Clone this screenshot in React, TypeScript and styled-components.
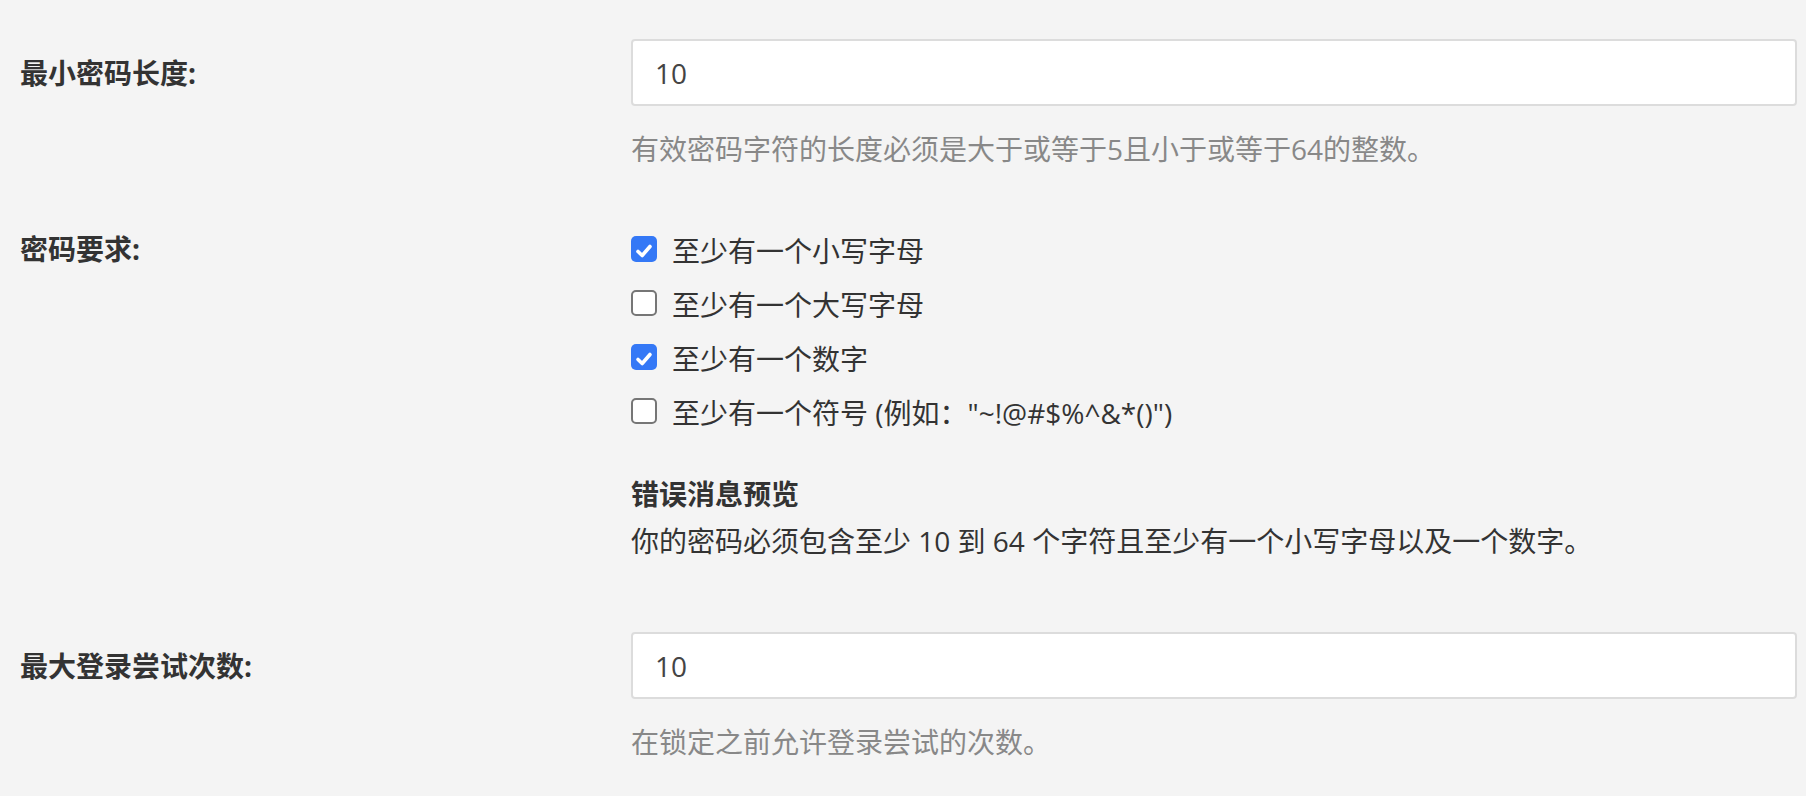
import React, { useState } from 'react';
import styled, { createGlobalStyle } from 'styled-components';

const GlobalStyle = createGlobalStyle`
  html, body {
    margin: 0;
    padding: 0;
    background: #f4f4f4;
  }
  body {
    font-family: 'Open Sans', 'Noto Sans CJK SC', sans-serif;
    color: #333;
  }
`;

type Rule = {
  id: string;
  label: string;
  name: string;
};

const rules: Rule[] = [
  { id: 'lower', label: '至少有一个小写字母', name: '小写字母' },
  { id: 'upper', label: '至少有一个大写字母', name: '大写字母' },
  { id: 'digit', label: '至少有一个数字', name: '数字' },
  { id: 'symbol', label: '至少有一个符号 (例如："~!@#$%^&*()")', name: '符号' },
];

const PasswordSettings = () => {
  const [minLength, setMinLength] = useState('10');
  const [maxAttempts, setMaxAttempts] = useState('10');
  const [checked, setChecked] = useState<Record<string, boolean>>({
    lower: true,
    upper: false,
    digit: true,
    symbol: false,
  });

  const toggle = (id: string) => {
    setChecked((prev) => ({ ...prev, [id]: !prev[id] }));
  };

  const names = rules.filter((r) => checked[r.id]).map((r) => r.name);
  const message =
    `你的密码必须包含至少 ${minLength} 到 64 个字符` +
    (names.length ? `且至少有一个${names.join('以及一个')}` : '') +
    '。';

  return (
    <S.Page>
      <S.Row $align="center">
        <S.Label>最小密码长度:</S.Label>
        <S.Field>
          <S.Input value={minLength} onChange={(e) => setMinLength(e.target.value)} />
        </S.Field>
      </S.Row>
      <S.Row>
        <div />
        <S.Help>有效密码字符的长度必须是大于或等于5且小于或等于64的整数。</S.Help>
      </S.Row>

      <S.Row $gap={52}>
        <S.Label $line={54}>密码要求:</S.Label>
        <S.Field>
          <S.CheckList>
            {rules.map((rule) => (
              <S.CheckItem key={rule.id}>
                <input
                  type="checkbox"
                  checked={!!checked[rule.id]}
                  onChange={() => toggle(rule.id)}
                />
                <S.Box $checked={!!checked[rule.id]}>
                  {checked[rule.id] && (
                    <svg width="22" height="22" viewBox="0 0 22 22">
                      <path
                        d="M5 11.5 L9.2 15.5 L17 6.5"
                        fill="none"
                        stroke="#fff"
                        strokeWidth="3.6"
                        strokeLinecap="round"
                        strokeLinejoin="round"
                      />
                    </svg>
                  )}
                </S.Box>
                <span>{rule.label}</span>
              </S.CheckItem>
            ))}
          </S.CheckList>
          <S.PreviewTitle>错误消息预览</S.PreviewTitle>
          <S.PreviewText>{message}</S.PreviewText>
        </S.Field>
      </S.Row>

      <S.Row $gap={70} $align="center">
        <S.Label>最大登录尝试次数:</S.Label>
        <S.Field>
          <S.Input value={maxAttempts} onChange={(e) => setMaxAttempts(e.target.value)} />
        </S.Field>
      </S.Row>
      <S.Row>
        <div />
        <S.Help>在锁定之前允许登录尝试的次数。</S.Help>
      </S.Row>
    </S.Page>
  );
};

const S = {
  Page: styled.div`
    box-sizing: border-box;
    width: 1806px;
    min-height: 796px;
    padding: 39px 9px 40px 20px;
    font-size: 28px;
    line-height: 42px;
  `,
  Row: styled.div<{ $gap?: number; $align?: string }>`
    display: grid;
    grid-template-columns: 611px 1fr;
    align-items: ${(p) => p.$align || 'start'};
    margin-top: ${(p) => (p.$gap ? `${p.$gap}px` : '0')};
  `,
  Label: styled.div<{ $line?: number }>`
    font-weight: 700;
    color: #333;
    line-height: ${(p) => (p.$line ? `${p.$line}px` : '42px')};
  `,
  Field: styled.div`
    display: flex;
    flex-direction: column;
    min-width: 0;
  `,
  Input: styled.input`
    box-sizing: border-box;
    width: 100%;
    height: 67px;
    padding: 0 22px;
    border: 2px solid #dcdcdc;
    border-radius: 4px;
    background: #fff;
    font-family: 'Open Sans', 'Noto Sans CJK SC', sans-serif;
    font-size: 28px;
    color: #444;
    outline: none;
    &:focus {
      border-color: #3478f6;
    }
  `,
  Help: styled.p`
    margin: 22px 0 0;
    color: #888;
    font-size: 28px;
    line-height: 42px;
  `,
  CheckList: styled.div`
    display: flex;
    flex-direction: column;
  `,
  CheckItem: styled.label`
    display: flex;
    align-items: center;
    height: 54px;
    gap: 15px;
    color: #333;
    cursor: pointer;
    input {
      position: absolute;
      opacity: 0;
      width: 0;
      height: 0;
    }
    span {
      padding-top: 3px;
    }
  `,
  Box: styled.span<{ $checked: boolean }>`
    box-sizing: border-box;
    display: flex;
    align-items: center;
    justify-content: center;
    flex: none;
    width: 26px;
    height: 26px;
    border-radius: 5px;
    border: ${(p) => (p.$checked ? 'none' : '2px solid #767676')};
    background: ${(p) => (p.$checked ? '#3478f6' : '#fff')};
  `,
  PreviewTitle: styled.div`
    margin-top: 35px;
    font-weight: 700;
    color: #333;
  `,
  PreviewText: styled.div`
    margin-top: 5px;
    color: #333;
  `,
};

export default function App() {
  return (
    <>
      <GlobalStyle />
      <PasswordSettings />
    </>
  );
}
